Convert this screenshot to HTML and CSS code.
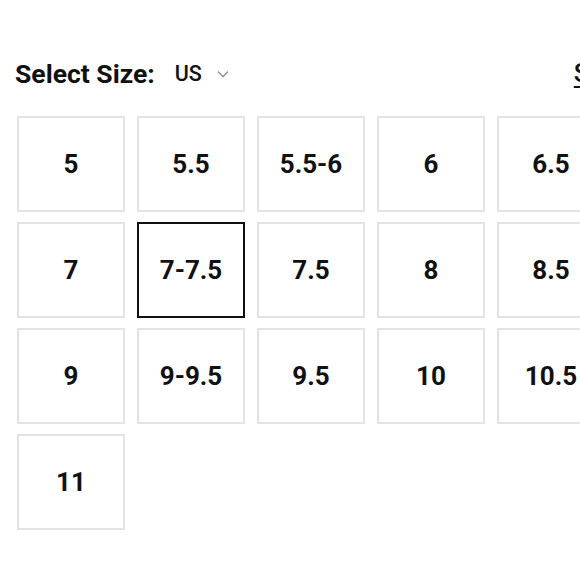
FILE: index.html
```html
<!DOCTYPE html>
<html>
<head>
<meta charset="utf-8">
<link rel="stylesheet" href="styles.css">
</head>
<body>
<div class="page">
  <div class="header">
    <span class="title">Select Size:</span>
    <span class="unit">US
      <svg class="chev" width="12" height="8" viewBox="0 0 12 8"><path d="M1 1.5 L6 6.5 L11 1.5" fill="none" stroke="#999" stroke-width="1.6"/></svg>
    </span>
    <a class="guide">Size Guide</a>
  </div>
  <div class="grid">
    <div class="size">5</div>
    <div class="size">5.5</div>
    <div class="size">5.5-6</div>
    <div class="size">6</div>
    <div class="size">6.5</div>
    <div class="size">7</div>
    <div class="size selected">7-7.5</div>
    <div class="size">7.5</div>
    <div class="size">8</div>
    <div class="size">8.5</div>
    <div class="size">9</div>
    <div class="size">9-9.5</div>
    <div class="size">9.5</div>
    <div class="size">10</div>
    <div class="size">10.5</div>
    <div class="size">11</div>
  </div>
</div>
</body>
</html>
```
FILE: styles.css
```css
html, body {
  margin: 0;
  padding: 0;
  background: #fff;
  overflow: hidden;
}
body {
  width: 580px;
  height: 580px;
  font-family: Roboto, "Liberation Sans", sans-serif;
  color: #111;
}
.page {
  width: 700px;
  padding: 56px 0 0 17px;
}
.header {
  display: flex;
  align-items: center;
  height: 34px;
}
.title {
  font-size: 26.5px;
  font-weight: 700;
  margin-left: -2px;
}
.unit {
  display: flex;
  align-items: center;
  margin-left: 20px;
  font-size: 21.5px;
  font-weight: 500;
}
.chev {
  margin-left: 15px;
  margin-top: 2px;
}
.guide {
  margin-left: 345px;
  font-size: 26px;
  font-weight: 500;
  text-decoration: underline;
  text-underline-offset: 4px;
  white-space: nowrap;
}
.grid {
  display: grid;
  grid-template-columns: repeat(5, 108px);
  grid-auto-rows: 96px;
  column-gap: 12px;
  row-gap: 10px;
  margin-top: 26px;
}
.size {
  box-sizing: border-box;
  border: 2px solid #e3e3e3;
  display: flex;
  align-items: center;
  justify-content: center;
  font-size: 26px;
  font-weight: 700;
  color: #111;
}
.size.selected {
  border-color: #111;
}
```
